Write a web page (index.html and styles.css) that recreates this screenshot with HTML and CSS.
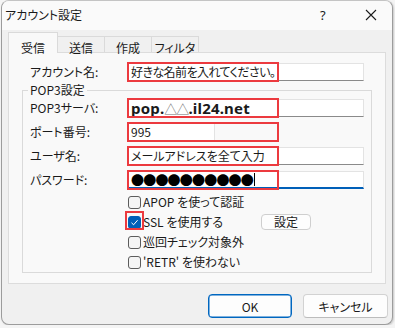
FILE: index.html
```html
<!DOCTYPE html>
<html lang="ja">
<head>
  <meta charset="UTF-8" />
  <title>アカウント設定</title>
  <link rel="stylesheet" href="styles.css">
</head>
<body>

  <div class="window">
    <!-- title bar -->
    <div class="titlebar">
      <span class="title">アカウント設定</span>
      <span class="help">?</span>
      <span class="close">
        <svg width="12" height="12" viewBox="0 0 12 12"><path d="M1 1 L11 11 M11 1 L1 11" stroke="#1b1b1b" stroke-width="1.1" fill="none"/></svg>
      </span>
    </div>

    <!-- tabs -->
    <div class="tabs">
      <div class="tab active">受信</div>
      <div class="tab">送信</div>
      <div class="tab">作成</div>
      <div class="tab">フィルタ</div>
    </div>

    <div class="panel">
      <div class="row account">
        <label>アカウント名:</label>
        <div class="field"><span class="value tight">好きな名前を入れてください。</span><span class="mark"></span></div>
      </div>

      <fieldset class="group">
        <legend>POP3設定</legend>

        <div class="row">
          <label>POP3サーバ:</label>
          <div class="field"><span class="value big">pop.<span class="tri">△△</span>.il24.net</span><span class="mark"></span></div>
        </div>
        <div class="row">
          <label>ポート番号:</label>
          <div class="field short"><span class="value">995</span><span class="mark"></span></div>
        </div>
        <div class="row">
          <label>ユーザ名:</label>
          <div class="field"><span class="value">メールアドレスを全て入力</span><span class="mark"></span></div>
        </div>
        <div class="row">
          <label>パスワード:</label>
          <div class="field focused"><span class="value dots">●●●●●●●●●●</span><span class="caret"></span><span class="mark"></span></div>
        </div>

        <div class="checks">
          <div class="check"><span class="box"></span>APOP を使って認証</div>
          <div class="check ssl">
            <div class="check-label"><span class="box checked">
              <svg width="9" height="9" viewBox="0 0 9 9"><path d="M1.5 4.8 L3.6 6.8 L7.6 2.2" stroke="#fff" stroke-width="1" fill="none"/></svg>
            </span><span class="mark"></span>SSL を使用する</div>
            <button class="small-btn">設定</button>
          </div>
          <div class="check"><span class="box"></span>巡回チェック対象外</div>
          <div class="check"><span class="box"></span>'RETR' を使わない</div>
        </div>
      </fieldset>
    </div>

    <div class="buttons">
      <button class="btn default">OK</button>
      <button class="btn">キャンセル</button>
    </div>
  </div>

</body>
</html>
```

FILE: styles.css
```css
body {
  margin: 0;
  background: #f4f4f4;
  font-family: "Noto Sans CJK JP", "Noto Sans", sans-serif;
  font-size: 12px;
  font-feature-settings: "palt";
  color: #1a1a1a;
}

.window {
  margin-left: 1px;
  width: 392px;
  height: 325px;
  box-sizing: border-box;
  border: 1px solid #9c9c9c;
  border-top-color: #c4c4c4;
  border-radius: 8px;
  background: #f0f0f0;
  box-shadow: 1px 1px 2px rgba(0, 0, 0, 0.18);
  overflow: hidden;
}

/* title bar */
.titlebar {
  height: 29px;
  display: flex;
  align-items: center;
  padding: 0 0 2px 3px;
  box-sizing: border-box;
  background: #fafafa;
}

.title {
  flex: 1;
  line-height: 14px;
}

.help {
  width: 8px;
  margin-right: 37px;
  font-family: "Noto Sans", sans-serif;
  font-size: 13px;
  line-height: 14px;
}

.close {
  display: flex;
  margin-right: 15px;
}

/* tabs */
.tabs {
  height: 22px;
  display: flex;
  align-items: flex-end;
  padding-left: 6px;
  position: relative;
  z-index: 1;
}

.tab {
  height: 16px;
  box-sizing: border-box;
  padding: 4px 0 0;
  line-height: 14px;
  text-align: center;
  width: 47px;
  border: 1px solid #dadada;
  border-bottom: none;
  border-left: none;
  background: #f0f0f0;
}

.tab.active {
  width: 50px;
  height: 21px;
  padding-top: 8px;
  margin-bottom: -1px;
  border-left: 1px solid #dadada;
  background: #f9f9f9;
}

/* panel */
.panel {
  margin: 0 6px;
  padding: 10px 13px 10px 13px;
  background: #f9f9f9;
  border: 1px solid #dcdcdc;
}

.row {
  display: flex;
  align-items: center;
  height: 18px;
}

.row + .row {
  margin-top: 6px;
}

.account {
  padding: 0 8px;
}

.row label {
  width: 97px;
  line-height: 14px;
}

.field {
  position: relative;
  flex: 1;
  height: 18px;
  box-sizing: border-box;
  background: #fff;
  border: 1px solid #e3e3e3;
  border-bottom-color: #8a8a8a;
  display: flex;
  align-items: center;
  padding-left: 3px;
}

.field.short {
  flex: none;
  width: 88px;
}

.field.focused {
  border-bottom: 2px solid #005fb8;
}

.value {
  line-height: 14px;
  white-space: nowrap;
}

.value.tight {
  letter-spacing: -0.55px;
}

.value.big {
  font-family: "Noto Sans", sans-serif;
  font-weight: bold;
  font-size: 15px;
  letter-spacing: 0.2px;
}

.tri {
  font-family: "Noto Sans CJK JP", sans-serif;
  font-weight: normal;
  font-size: 13px;
  letter-spacing: -1px;
  color: #6f6f6f;
}

.value.dots {
  font-size: 13px;
  letter-spacing: -0.8px;
  color: #000;
}

.caret {
  width: 1px;
  height: 13px;
  background: #000;
  margin-left: 1px;
}

/* red annotation frames */
.mark {
  position: absolute;
  left: -1px;
  top: -2px;
  bottom: -2px;
  width: 152px;
  border: 2px solid #ec3a3f;
  box-sizing: border-box;
}

.field.focused .mark {
  bottom: -3px;
}

/* group box */
.group {
  margin: 2px 0 0;
  padding: 2px 7px 0;
  border: 1px solid #dadada;
}

.group legend {
  padding: 0 2px;
  margin-left: -2px;
  line-height: 14px;
}

.checks {
  margin-top: 3px;
  padding-left: 98px;
}

.check {
  height: 20px;
  display: flex;
  align-items: center;
  line-height: 14px;
}

.check-label {
  position: relative;
  width: 133px;
  display: flex;
  align-items: center;
}

.box {
  width: 13px;
  height: 13px;
  box-sizing: border-box;
  border: 1px solid #5c5c5c;
  border-radius: 3px;
  background: #f4f4f4;
  margin-right: 2px;
  display: flex;
  align-items: center;
  justify-content: center;
}

.box.checked {
  background: #005fb8;
  border-color: #005fb8;
}

.check-label .mark {
  left: -3px;
  top: -4px;
  bottom: auto;
  width: 19px;
  height: 19px;
}

.small-btn {
  width: 50px;
  height: 16px;
  padding: 0;
  font: inherit;
  line-height: 14px;
  background: #fdfdfd;
  border: 1px solid #cfcfcf;
  border-radius: 4px;
  color: #1a1a1a;
}

/* dialog buttons */
.buttons {
  display: flex;
  justify-content: flex-end;
  gap: 11px;
  padding: 10px 4px 0 0;
}

.btn {
  width: 85px;
  height: 24px;
  padding: 0;
  font: inherit;
  background: #fdfdfd;
  border: 1px solid #d2d2d2;
  border-bottom-color: #bcbcbc;
  border-radius: 4px;
  color: #1a1a1a;
}

.btn.default {
  width: 84px;
  border: 1px solid #0067c0;
  box-shadow: inset 0 0 0 0.5px #0067c0;
}
```
